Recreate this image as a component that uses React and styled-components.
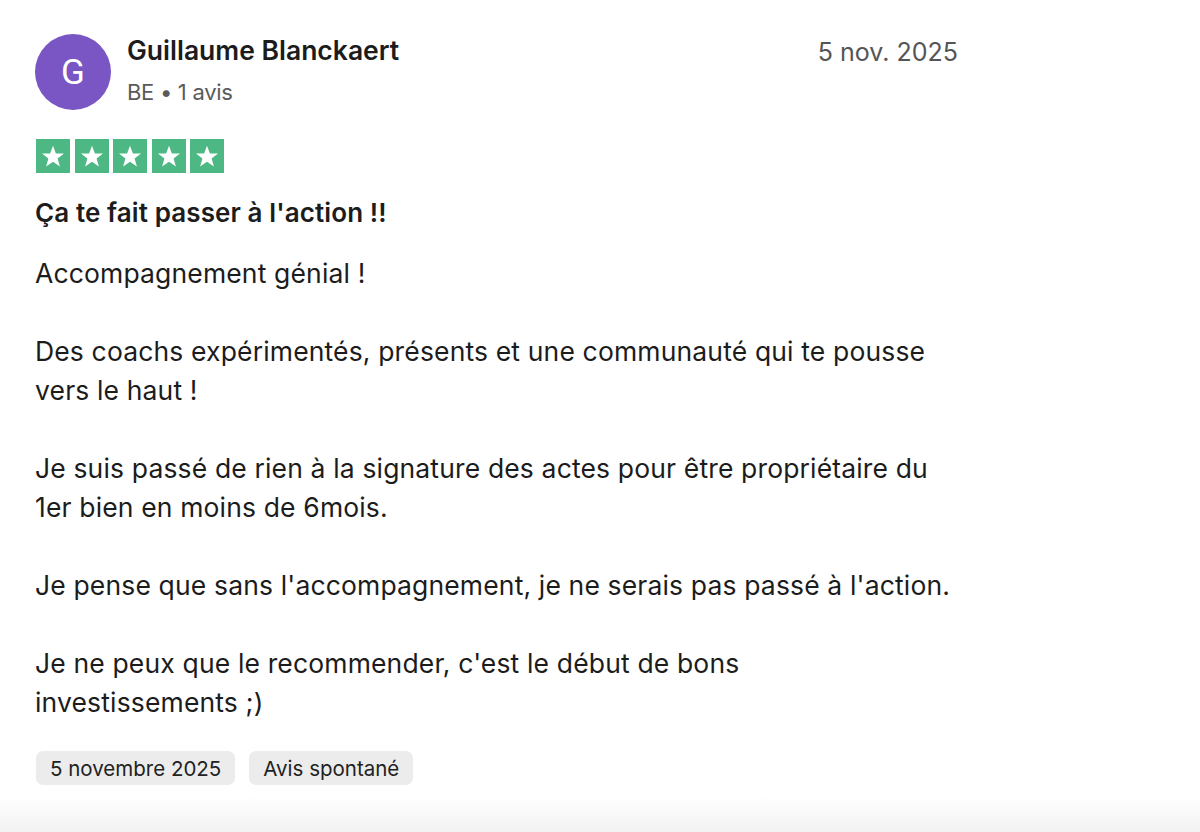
import React from "react";
import styled, { createGlobalStyle } from "styled-components";

const GlobalStyle = createGlobalStyle`
    html, body {
        margin: 0;
        padding: 0;
        background: #ffffff;
    }
    body {
        font-family: Inter, "Noto Sans", "Liberation Sans", sans-serif;
        color: #1c1c1c;
    }
`

const Page = styled.div`
    min-height: 100vh;
    display: flex;
    flex-direction: column;
    box-sizing: border-box;
    padding-top: 34px;
`

const Card = styled.article`
    width: 923px;
    margin-left: 35px;
    display: flex;
    flex-direction: column;
`

const Header = styled.header`
    display: flex;
    align-items: flex-start;
    gap: 16px;
`

const Avatar = styled.div`
    width: 76px;
    height: 76px;
    border-radius: 50%;
    background: #7a55c4;
    color: #ffffff;
    display: flex;
    align-items: center;
    justify-content: center;
    font-size: 35px;
    font-family: Roboto, "Liberation Sans", sans-serif;
    flex-shrink: 0;
`

const Who = styled.div`
    flex: 1;
    display: flex;
    flex-direction: column;
`

const Name = styled.div`
    font-size: 26.5px;
    font-weight: 600;
    line-height: 32px;
`

const Meta = styled.div`
    font-size: 22px;
    line-height: 28px;
    margin-top: 12px;
    color: #5a5a5a;
    letter-spacing: -0.3px;
`

const DateText = styled.time`
    font-size: 25px;
    line-height: 32px;
    color: #555555;
    padding-top: 2px;
`

const Stars = styled.div`
    display: flex;
    gap: 4.5px;
    margin-top: 29px;
    margin-left: 1px;
`

const StarBox = styled.span`
    width: 34px;
    height: 34px;
    background: ${(p) => p.$color};
    display: flex;
    align-items: center;
    justify-content: center;
`

const Title = styled.h2`
    margin: 20px 0 0;
    font-size: 26px;
    font-weight: 600;
    line-height: 39px;
    letter-spacing: 0.1px;
`

const Body = styled.div`
    margin-top: 22px;
    font-size: 26.5px;
    line-height: 39px;
    letter-spacing: 0.15px;
`

const Para = styled.p`
    margin: 0 0 39px;
    &:last-child {
        margin-bottom: 0;
    }
`

const Tags = styled.div`
    display: flex;
    gap: 14px;
    margin-top: 29px;
    margin-left: 1px;
`

const Tag = styled.span`
    background: #ececec;
    border-radius: 7px;
    height: 34px;
    padding: 0 14px;
    display: flex;
    align-items: center;
    font-size: 20.5px;
    color: #222222;
`

const Fade = styled.div`
    margin-top: auto;
    height: 36px;
    background: linear-gradient(to bottom, #ffffff, #f2f2f2);
`

const Star = () => (
    <svg width="24" height="24" viewBox="0 0 24 24">
        <path
            d="M12 1.8l2.9 7.6 8.1.2-6.4 5 2.3 7.8L12 17.8l-6.9 4.6 2.3-7.8-6.4-5 8.1-.2z"
            fill="#ffffff"
        />
    </svg>
)

const paragraphs = [
    "Accompagnement génial\u00a0!",
    "Des coachs expérimentés, présents et une communauté qui te pousse vers le haut\u00a0!",
    "Je suis passé de rien à la signature des actes pour être propriétaire du 1er bien en moins de 6mois.",
    "Je pense que sans l'accompagnement, je ne serais pas passé à l'action.",
    "Je ne peux que le recommender, c'est le début de bons investissements\u00a0;)",
]

const App = () => {
    return (
        <Page>
            <GlobalStyle />
            <Card>
                <Header>
                    <Avatar>G</Avatar>
                    <Who>
                        <Name>Guillaume Blanckaert</Name>
                        <Meta>BE • 1 avis</Meta>
                    </Who>
                    <DateText>5 nov. 2025</DateText>
                </Header>
                <Stars>
                    {[0, 1, 2, 3, 4].map((i) => (
                        <StarBox key={i} $color="#4db883">
                            <Star />
                        </StarBox>
                    ))}
                </Stars>
                <Title>Ça te fait passer à l'action !!</Title>
                <Body>
                    {paragraphs.map((p, i) => (
                        <Para key={i}>{p}</Para>
                    ))}
                </Body>
                <Tags>
                    <Tag>5 novembre 2025</Tag>
                    <Tag>Avis spontané</Tag>
                </Tags>
            </Card>
            <Fade />
        </Page>
    )
}

export default App
